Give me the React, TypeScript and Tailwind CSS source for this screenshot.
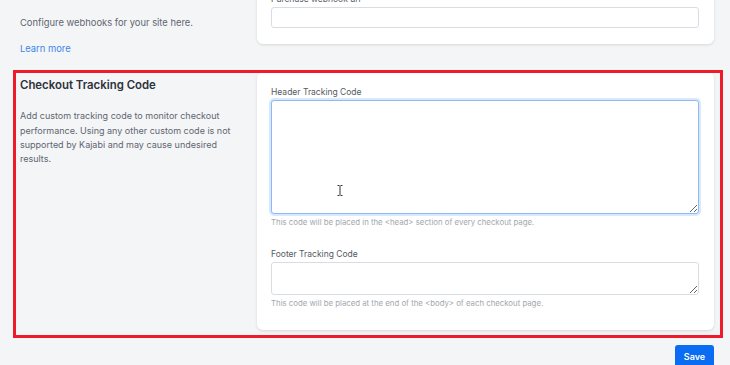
import React from "react";

function Section({
  title,
  children,
  aside,
}: {
  title: string;
  children: React.ReactNode;
  aside: React.ReactNode;
}) {
  return (
    <div className="flex items-start">
      <div className="w-[237px] shrink-0 pt-[5px] pr-4">
        <h2 className="text-[11.4px] leading-[16px] font-semibold text-[#2d3139]">{title}</h2>
        {aside}
      </div>
      <div className="flex-1 bg-white rounded-md shadow-[0_1px_3px_rgba(0,0,0,0.12)] pl-[14px] pr-[15px] pt-[14px]">
        {children}
      </div>
    </div>
  );
}

function Label({ children }: { children: React.ReactNode }) {
  return <label className="block text-[8.5px] leading-[12px] text-[#555a61] mb-[2px]">{children}</label>;
}

function Help({ children }: { children: React.ReactNode }) {
  return <p className="text-[7.8px] leading-[11px] text-[#a3a7ad] mt-[3px]">{children}</p>;
}

export default function App() {
  return (
    <div className="min-h-[365px] bg-[#f4f5f7] overflow-hidden" style={{ fontFamily: "Inter, 'Noto Sans', sans-serif" }}>
      <div className="-mt-[21px] pl-5 pr-4 flex flex-col gap-[16px]">
        <Section
          title="Webhooks"
          aside={
            <>
              <p className="mt-[16px] text-[9.4px] leading-[14.3px] text-[#5f6670]">
                Configure webhooks for your site here.
              </p>
              <a className="block mt-[12px] text-[9.4px] leading-[14px] text-[#3d86e8]">Learn more</a>
            </>
          }
        >
          <div className="pb-[16px]">
            <Label>Purchase webhook url</Label>
            <input className="block w-full h-[21px] mt-[1px] border border-[#d9dde3] rounded-[3px] bg-white" />
          </div>
        </Section>

        <div className="relative">
          <Section
            title="Checkout Tracking Code"
            aside={
              <p className="mt-[16px] text-[9px] leading-[14.3px] text-[#5f6670]">
                Add custom tracking code to monitor checkout performance. Using any other custom code is not
                supported by Kajabi and may cause undesired results.
              </p>
            }
          >
            <div className="pb-[21px]">
              <Label>Header Tracking Code</Label>
              <div className="relative">
                <textarea className="block w-full h-[114px] border border-[#8db9f4] rounded-[3px] shadow-[0_0_0_2px_rgba(147,191,248,0.35)] outline-none bg-white" />
                <svg
                  className="absolute left-[66px] top-[85px]"
                  width="6"
                  height="11"
                  viewBox="0 0 6 11"
                  fill="none"
                  stroke="#333"
                  strokeWidth="1"
                >
                  <path d="M0.5 0.5h2m1 0h2M3 1v9M0.5 10.5h2m1 0h2" />
                </svg>
              </div>
              <Help>This code will be placed in the &lt;head&gt; section of every checkout page.</Help>
              <div className="mt-[20px]">
                <Label>Footer Tracking Code</Label>
                <textarea className="block w-full h-[33px] border border-[#d9dde3] rounded-[3px] outline-none bg-white" />
                <Help>This code will be placed at the end of the &lt;body&gt; of each checkout page.</Help>
              </div>
            </div>
          </Section>
          <div className="absolute -top-[2px] -left-[7px] w-[710px] h-[268px] border-[3px] border-[#ee1c2a] pointer-events-none" />
        </div>

        <div className="flex justify-end -mt-[1px]">
          <button className="h-[23px] w-[39px] rounded-[3px] bg-[#0a6cf2] text-white text-[9px] font-semibold">
            Save
          </button>
        </div>
      </div>
    </div>
  );
}
